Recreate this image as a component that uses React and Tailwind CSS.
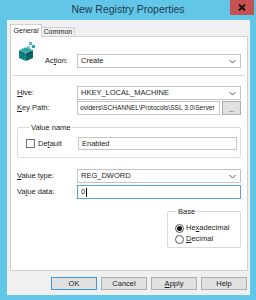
import React from 'react';

const RegIcon = () => (
    <svg width="20" height="20" viewBox="0 0 20 20">
        {/* small floating cubes */}
        <rect x="12" y="0" width="3" height="3" fill="#4fc3c9" />
        <rect x="15" y="3" width="3" height="3" fill="#2aa7a8" />
        <rect x="10" y="4" width="3" height="3" fill="#7fd6d8" />
        {/* big cube block */}
        <polygon points="2,8 9,5 16,8 9,11" fill="#5fd0cc" />
        <polygon points="2,8 9,11 9,19 2,16" fill="#14928f" />
        <polygon points="9,11 16,8 16,16 9,19" fill="#0b6f70" />
        <path d="M4.3 9 L11.3 6 M6.6 10 L13.6 7 M4.5 7 L11.5 10 M6.8 6 L13.8 9" stroke="#0f7f7e" strokeWidth="0.6" />
        <path d="M2 10.7 L9 13.7 M2 13.4 L9 16.4 M4.3 9 L4.3 17 M6.6 10 L6.6 18" stroke="#0a5f5f" strokeWidth="0.6" />
        <path d="M9 13.7 L16 10.7 M9 16.4 L16 13.4 M11.3 10 L11.3 18 M13.6 9 L13.6 17" stroke="#074c4d" strokeWidth="0.6" />
    </svg>
);

const Chevron = () => (
    <svg width="7" height="5" viewBox="0 0 7 5" className="mr-[4px]">
        <path d="M0.5 1 L3.5 4 L6.5 1" fill="none" stroke="#555" strokeWidth="1" />
    </svg>
);

const Select = ({ value }) => (
    <div className="flex-1 h-[14px] bg-white border border-[#c4c4c4] flex items-center justify-between pl-[3px] text-[7.5px]">
        <span>{value}</span>
        <Chevron />
    </div>
);

const Label = ({ children }) => (
    <span className="w-[60px] shrink-0 text-[7.5px] leading-[14px]">{children}</span>
);

const App = () => {
    return (
        <div className="w-[256px] h-[300px] bg-[#62c6e8] flex flex-col font-['Liberation_Sans',sans-serif] text-[#222] overflow-hidden">
            {/* Title bar */}
            <div className="h-[20px] flex items-start shrink-0">
                <div className="flex-1 pl-[26px] h-[20px] flex items-center justify-center text-[10.5px] text-[#203a4c]">
                    New Registry Properties
                </div>
                <div className="w-[24px] h-[15px] bg-[#c75050] mr-[2px] flex items-center justify-center">
                    <svg width="8" height="7" viewBox="0 0 8 7">
                        <path d="M1 0.5 L7 6.5 M7 0.5 L1 6.5" stroke="#111" strokeWidth="1.8" />
                    </svg>
                </div>
            </div>

            {/* Client area */}
            <div className="flex-1 ml-[7px] mr-[6px] mb-[5px] bg-[#f0f0f0] flex flex-col pl-[3px] pr-[2px] pt-[4px] pb-[5px]">
                {/* Tabs */}
                <div className="flex items-end h-[13px] -mb-px relative z-10 text-[7px]">
                    <div className="w-[32px] h-[13px] bg-white border border-b-0 border-[#d0d0d0] flex items-center justify-center">
                        General
                    </div>
                    <div className="w-[33px] h-[10px] bg-[#f0f0f0] border border-l-0 border-[#d0d0d0] flex items-center justify-center">
                        Common
                    </div>
                </div>

                {/* Panel */}
                <div className="flex-1 bg-white border border-[#d0d0d0] flex flex-col px-[6px]">
                    <div className="flex items-start mt-[5px]">
                        <div className="w-[60px] shrink-0 flex items-start">
                            <RegIcon />
                            <span className="ml-[8px] mt-[12px] text-[7.5px] leading-[14px]">
                                Ac<span className="underline">t</span>ion:
                            </span>
                        </div>
                        <div className="flex-1 flex mt-[12px]">
                            <Select value="Create" />
                        </div>
                    </div>

                    <div className="h-px bg-[#dcdcdc] -mx-[4px] mt-[7px]" />

                    <div className="flex mt-[10px]">
                        <Label><span className="underline">H</span>ive:</Label>
                        <Select value="HKEY_LOCAL_MACHINE" />
                    </div>
                    <div className="flex mt-px">
                        <Label><span className="underline">K</span>ey Path:</Label>
                        <div className="flex-1 min-w-0 h-[14px] bg-white border border-[#c4c4c4] flex items-center pl-[2px] text-[6.6px] overflow-hidden whitespace-nowrap">
                            oviders\SCHANNEL\Protocols\SSL 3.0\Server
                        </div>
                        <div className="w-[19px] h-[14px] ml-[2px] bg-[#e1e1e1] border border-[#adadad] flex items-end justify-center text-[7px] leading-[9px]">
                            ...
                        </div>
                    </div>

                    <fieldset className="mt-[8px] border border-[#dcdcdc] rounded-[2px] pl-[8px] pr-[3px] pb-[7px]">
                        <legend className="ml-[4px] px-[1px] text-[7.5px] leading-[9px]">Value name</legend>
                        <div className="flex items-center mt-[5px]">
                            <div className="w-[9px] h-[9px] border border-[#707070] bg-white" />
                            <span className="ml-[3px] w-[40px] text-[7.5px]">
                                De<span className="underline">f</span>ault
                            </span>
                            <div className="flex-1 h-[13px] border border-[#c4c4c4] bg-white flex items-center pl-[3px] text-[7.5px]">
                                Enabled
                            </div>
                        </div>
                    </fieldset>

                    <div className="flex mt-[11px]">
                        <Label><span className="underline">V</span>alue type:</Label>
                        <Select value="REG_DWORD" />
                    </div>
                    <div className="flex mt-[2px]">
                        <Label>Va<span className="underline">l</span>ue data:</Label>
                        <div className="flex-1 h-[14px] bg-white border border-[#5a9fe0] flex items-center pl-[3px] text-[7.5px]">
                            0<span className="w-px h-[9px] bg-black ml-[1px]" />
                        </div>
                    </div>

                    <fieldset className="self-end w-[74px] mt-[8px] border border-[#dcdcdc] rounded-[2px] pl-[7px] pb-[3px]">
                        <legend className="ml-[2px] px-[1px] text-[7.5px] leading-[9px]">Base</legend>
                        <div className="flex items-center mt-[7px] h-[10px]">
                            <div className="w-[9px] h-[9px] rounded-full border border-[#555] bg-white flex items-center justify-center">
                                <div className="w-[5px] h-[5px] rounded-full bg-[#111]" />
                            </div>
                            <span className="ml-[2px] text-[7.5px]">
                                He<span className="underline">x</span>adecimal
                            </span>
                        </div>
                        <div className="flex items-center mt-px h-[10px]">
                            <div className="w-[9px] h-[9px] rounded-full border border-[#555] bg-white" />
                            <span className="ml-[2px] text-[7.5px]">
                                <span className="underline">D</span>ecimal
                            </span>
                        </div>
                    </fieldset>
                </div>

                {/* Buttons */}
                <div className="flex justify-end gap-[4px] mt-[6px] pr-[1px] text-[7.5px]">
                    <div className="w-[46px] h-[13px] bg-[#e1e1e1] border border-[#3c96e0] flex items-center justify-center">OK</div>
                    <div className="w-[46px] h-[13px] bg-[#e1e1e1] border border-[#adadad] flex items-center justify-center">Cancel</div>
                    <div className="w-[46px] h-[13px] bg-[#e1e1e1] border border-[#adadad] flex items-center justify-center">
                        <span><span className="underline">A</span>pply</span>
                    </div>
                    <div className="w-[46px] h-[13px] bg-[#e1e1e1] border border-[#adadad] flex items-center justify-center">Help</div>
                </div>
            </div>
        </div>
    );
};

export default App;
